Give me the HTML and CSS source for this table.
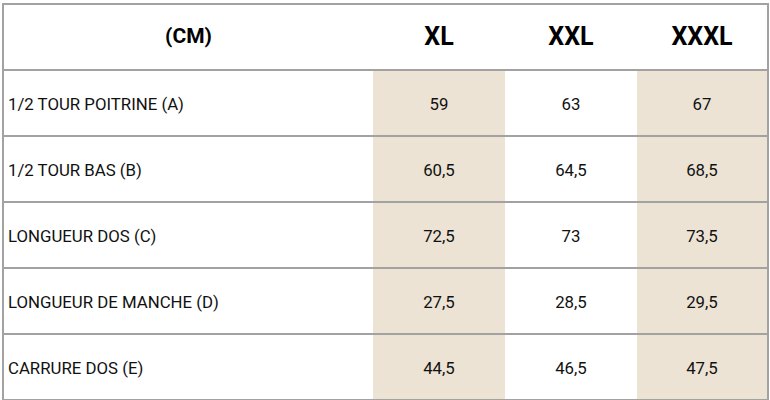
FILE: index.html
```html
<!DOCTYPE html>
<html>
<head>
<meta charset="utf-8">
<link rel="stylesheet" href="styles.css">
</head>
<body>
<div class="wrap">
  <div class="table">
    <div class="row head">
      <div class="cell label-h">(CM)</div>
      <div class="cell size">XL</div>
      <div class="cell size">XXL</div>
      <div class="cell size">XXXL</div>
    </div>
    <div class="row">
      <div class="cell label">1/2 TOUR POITRINE (A)</div>
      <div class="cell val shade">59</div>
      <div class="cell val">63</div>
      <div class="cell val shade">67</div>
    </div>
    <div class="row">
      <div class="cell label">1/2 TOUR BAS (B)</div>
      <div class="cell val shade">60,5</div>
      <div class="cell val">64,5</div>
      <div class="cell val shade">68,5</div>
    </div>
    <div class="row">
      <div class="cell label">LONGUEUR DOS (C)</div>
      <div class="cell val shade">72,5</div>
      <div class="cell val">73</div>
      <div class="cell val shade">73,5</div>
    </div>
    <div class="row">
      <div class="cell label">LONGUEUR DE MANCHE (D)</div>
      <div class="cell val shade">27,5</div>
      <div class="cell val">28,5</div>
      <div class="cell val shade">29,5</div>
    </div>
    <div class="row">
      <div class="cell label">CARRURE DOS (E)</div>
      <div class="cell val shade">44,5</div>
      <div class="cell val">46,5</div>
      <div class="cell val shade">47,5</div>
    </div>
  </div>
</div>
</body>
</html>
```
FILE: styles.css
```css
html, body {
  margin: 0;
  padding: 0;
  background: #ffffff;
}
body {
  font-family: Roboto, "Liberation Sans", sans-serif;
  color: #111111;
}
.wrap {
  padding: 3px 0 0 2px;
}
.table {
  width: 763px;
  border: 2px solid #a2a2a2;
}
.row {
  display: grid;
  grid-template-columns: 369px 132px 132px 130px;
  height: 64px;
}
.row + .row {
  border-top: 2px solid #a2a2a2;
}
.cell {
  display: flex;
  align-items: center;
  justify-content: center;
}
.label-h {
  font-weight: 700;
  font-size: 21px;
  color: #000;
  padding-bottom: 2px;
}
.size {
  font-weight: 700;
  font-size: 25px;
  color: #000;
  padding-bottom: 2px;
}
.label {
  justify-content: flex-start;
  padding-left: 4px;
  font-size: 16.8px;
  padding-top: 2px;
}
.val {
  font-size: 16.8px;
  padding-top: 2px;
}
.shade {
  background: #ece3d4;
}
```
